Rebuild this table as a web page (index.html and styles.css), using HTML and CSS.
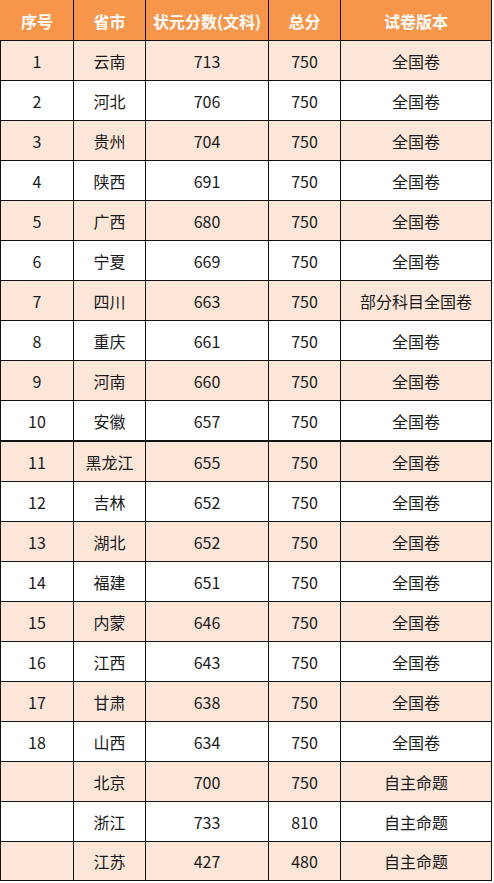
FILE: index.html
```html
<!DOCTYPE html>
<html lang="zh-CN">
<head>
<meta charset="utf-8">
<title>文科状元分数</title>
<link rel="stylesheet" href="styles.css">
</head>
<body>
<table class="scores">
  <colgroup>
    <col class="c1"><col class="c2"><col class="c3"><col class="c4"><col class="c5">
  </colgroup>
  <thead>
    <tr><th>序号</th><th>省市</th><th>状元分数(文科)</th><th>总分</th><th>试卷版本</th></tr>
  </thead>
  <tbody>
    <tr class="alt"><td>1</td><td>云南</td><td>713</td><td>750</td><td>全国卷</td></tr>
    <tr><td>2</td><td>河北</td><td>706</td><td>750</td><td>全国卷</td></tr>
    <tr class="alt"><td>3</td><td>贵州</td><td>704</td><td>750</td><td>全国卷</td></tr>
    <tr><td>4</td><td>陕西</td><td>691</td><td>750</td><td>全国卷</td></tr>
    <tr class="alt"><td>5</td><td>广西</td><td>680</td><td>750</td><td>全国卷</td></tr>
    <tr><td>6</td><td>宁夏</td><td>669</td><td>750</td><td>全国卷</td></tr>
    <tr class="alt"><td>7</td><td>四川</td><td>663</td><td>750</td><td>部分科目全国卷</td></tr>
    <tr><td>8</td><td>重庆</td><td>661</td><td>750</td><td>全国卷</td></tr>
    <tr class="alt"><td>9</td><td>河南</td><td>660</td><td>750</td><td>全国卷</td></tr>
    <tr><td>10</td><td>安徽</td><td>657</td><td>750</td><td>全国卷</td></tr>
    <tr class="alt thick"><td>11</td><td>黑龙江</td><td>655</td><td>750</td><td>全国卷</td></tr>
    <tr><td>12</td><td>吉林</td><td>652</td><td>750</td><td>全国卷</td></tr>
    <tr class="alt"><td>13</td><td>湖北</td><td>652</td><td>750</td><td>全国卷</td></tr>
    <tr><td>14</td><td>福建</td><td>651</td><td>750</td><td>全国卷</td></tr>
    <tr class="alt"><td>15</td><td>内蒙</td><td>646</td><td>750</td><td>全国卷</td></tr>
    <tr><td>16</td><td>江西</td><td>643</td><td>750</td><td>全国卷</td></tr>
    <tr class="alt"><td>17</td><td>甘肃</td><td>638</td><td>750</td><td>全国卷</td></tr>
    <tr><td>18</td><td>山西</td><td>634</td><td>750</td><td>全国卷</td></tr>
    <tr class="alt"><td></td><td>北京</td><td>700</td><td>750</td><td>自主命题</td></tr>
    <tr><td></td><td>浙江</td><td>733</td><td>810</td><td>自主命题</td></tr>
    <tr class="alt last"><td></td><td>江苏</td><td>427</td><td>480</td><td>自主命题</td></tr>
  </tbody>
</table>
</body>
</html>
```
FILE: styles.css
```css
html, body {
  margin: 0;
  padding: 0;
  background: #ffffff;
}

.scores {
  border-collapse: collapse;
  table-layout: fixed;
  width: 491px;
  font-family: "Noto Sans CJK SC", "Liberation Sans", sans-serif;
  font-size: 16px;
  color: #1a1a1a;
}

.c1 { width: 73px; }
.c2 { width: 72px; }
.c3 { width: 123px; }
.c4 { width: 72px; }
.c5 { width: 151px; }

.scores th,
.scores td {
  border: 1px solid #111111;
  text-align: center;
  vertical-align: middle;
  padding: 0;
  line-height: 20px;
}

.scores th {
  height: 39px;
  background: #f7964a;
  color: #ffffff;
  font-weight: bold;
  border-top-color: #f7964a;
  border-left-color: #f7964a;
}

.scores td {
  height: 39px;
}

.scores tr.alt td {
  background: #fce6d8;
}

.scores tr.thick td {
  border-top-width: 2px;
}

.scores tr.last td {
  height: 38px;
}
```
